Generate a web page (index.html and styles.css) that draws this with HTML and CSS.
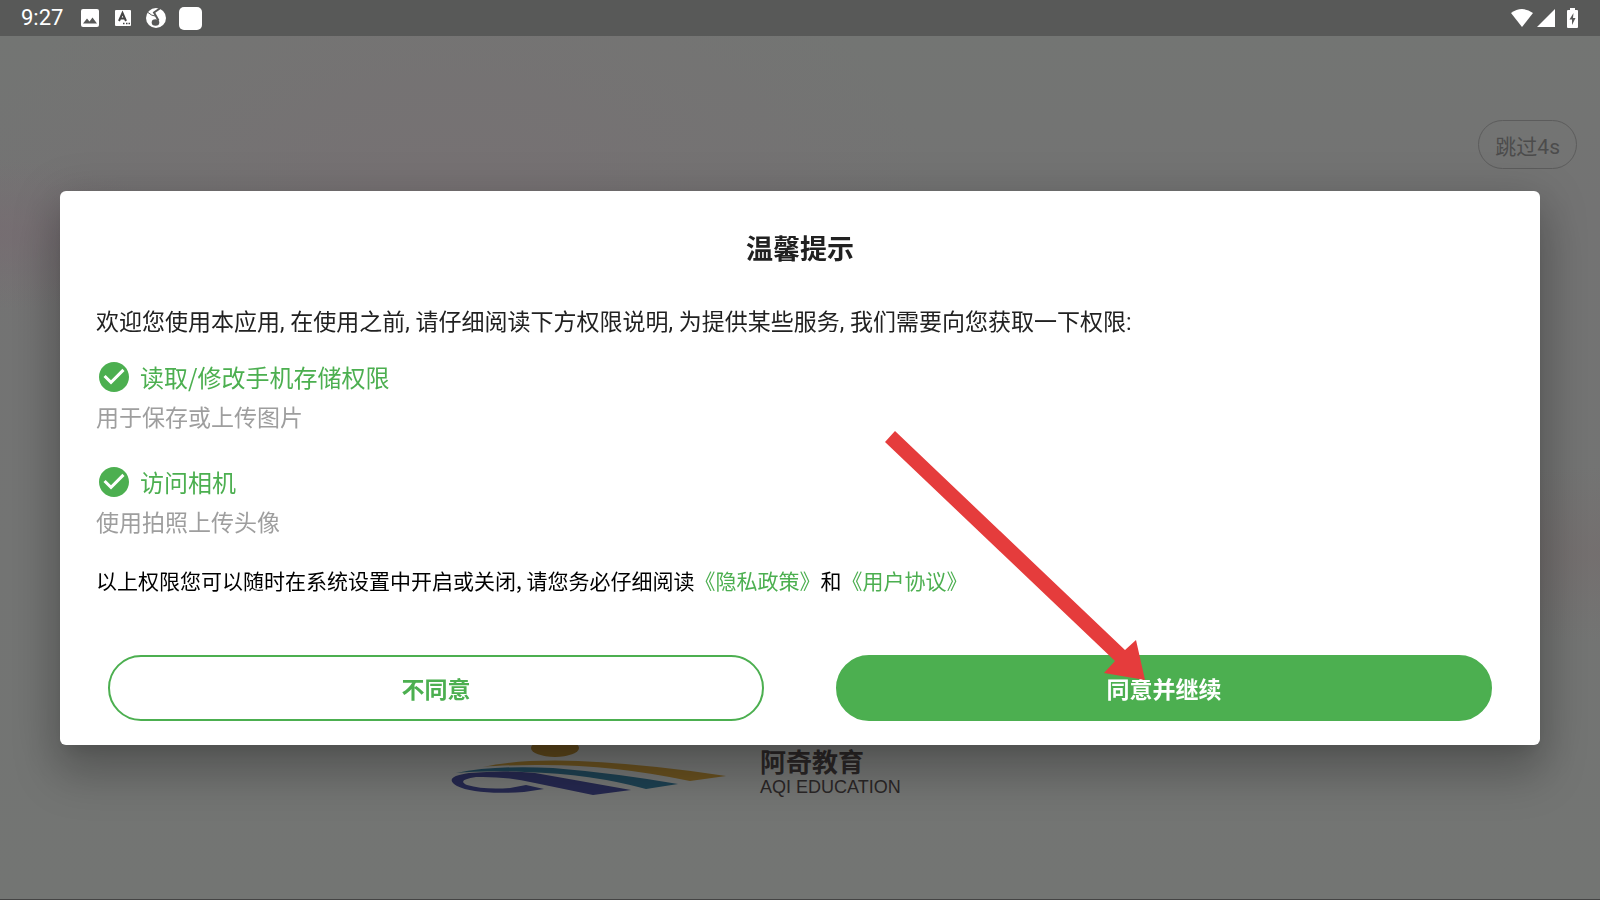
FILE: index.html
```html
<!DOCTYPE html>
<html lang="zh-CN">
<head>
    <meta charset="UTF-8">
    <meta name="viewport" content="width=device-width, initial-scale=1.0">
    <title>温馨提示</title>
    <link rel="stylesheet" href="styles.css">
</head>
<body>
    <header class="status-bar">
        <div class="status-left">
            <span class="clock">9:27</span>
            <svg class="status-icon" viewBox="0 0 20 20" aria-hidden="true">
                <rect x="1" y="1" width="18" height="18" rx="2" fill="#fff"/>
                <path d="M3 15.500l4-5 2.500 3 3-4 4.500 6z" fill="#585958"/>
            </svg>
            <svg class="status-icon" viewBox="0 0 20 20" aria-hidden="true">
                <rect x="2" y="2" width="16" height="16" rx="1" fill="#fff"/>
                <path d="M6 13L9.500 5L13 13M7.300 10.500h4.400" fill="none" stroke="#444" stroke-width="2"/>
                <path d="M10 15.500h1.500M13 15.500h1.500M15.500 15.500h1.500" stroke="#444" stroke-width="1.500"/>
            </svg>
            <svg class="status-icon" viewBox="0 0 20 20" aria-hidden="true">
                <circle cx="10" cy="10" r="10" fill="#fff"/>
                <path d="M14.500 0L8 4.500l4.500 8" fill="none" stroke="#585958" stroke-width="2"/>
                <ellipse cx="9.500" cy="14.500" rx="3.800" ry="3.200" fill="#585958"/>
                <path d="M2 4.500Q6 8 9 8" fill="none" stroke="#585958" stroke-width="1"/>
            </svg>
            <span class="app-square"></span>
        </div>
        <div class="status-right">
            <svg width="22" height="18" viewBox="0 0 22 18" aria-hidden="true">
                <path d="M0 4Q11-4 22 4L11 18z" fill="#fff"/>
            </svg>
            <svg width="18" height="18" viewBox="0 0 18 18" aria-hidden="true">
                <path d="M18 0v18H0z" fill="#fff"/>
            </svg>
            <svg class="battery" width="11" height="20" viewBox="0 0 11 20" aria-hidden="true">
                <path d="M3 0h5v2h2q1 0 1 1v16q0 1-1 1H1q-1 0-1-1V3q0-1 1-1h2z" fill="#fff"/>
                <path d="M6.500 5L2.500 11.500H5V17l3.500-7H6z" fill="#585958"/>
            </svg>
        </div>
    </header>

    <main class="splash">
        <button class="skip" type="button">跳过4s</button>
        <div class="brand">
            <svg class="brand-mark" viewBox="0 0 276 52" aria-hidden="true">
                <ellipse cx="105" cy="5" rx="24" ry="9" fill="#5e471b"/>
                <path d="M33 24Q68 16 128 18Q198 21 276 33L240 38Q160 21 85 22Q52 22 33 24z" fill="#68501f"/>
                <path d="M6 30Q45 22 103 25Q164 30 228 41L196 46Q142 31 75 29Q35 27 6 30z" fill="#1d4051"/>
                <path d="M94 46L74 49Q25 52 7 43Q-8 34 19 30Q55 27 85 30L181 47L143 52L85 40Q54 33 26 34Q6 37 17 42Q34 47 60 45L76 42z" fill="#25284f"/>
            </svg>
            <div class="brand-name">
                <span class="brand-cn">阿奇教育</span>
                <span class="brand-en">AQI EDUCATION</span>
            </div>
        </div>
    </main>

    <div class="overlay">
        <section class="dialog" role="dialog" aria-modal="true" aria-labelledby="dialog-title">
            <h1 id="dialog-title">温馨提示</h1>
            <p class="intro">欢迎您使用本应用, 在使用之前, 请仔细阅读下方权限说明, 为提供某些服务, 我们需要向您获取一下权限:</p>
            <ul class="permissions">
                <li>
                    <h2>
                        <svg class="check" viewBox="0 0 24 24" aria-hidden="true">
                            <path d="M12 2C6.480 2 2 6.480 2 12s4.480 10 10 10 10-4.480 10-10S17.520 2 12 2zm-2 15l-5-5 1.410-1.410L10 14.170l7.590-7.590L19 8l-9 9z" fill="#4caf50"/>
                        </svg>
                        读取/修改手机存储权限
                    </h2>
                    <p>用于保存或上传图片</p>
                </li>
                <li>
                    <h2>
                        <svg class="check" viewBox="0 0 24 24" aria-hidden="true">
                            <path d="M12 2C6.480 2 2 6.480 2 12s4.480 10 10 10 10-4.480 10-10S17.520 2 12 2zm-2 15l-5-5 1.410-1.410L10 14.170l7.590-7.590L19 8l-9 9z" fill="#4caf50"/>
                        </svg>
                        访问相机
                    </h2>
                    <p>使用拍照上传头像</p>
                </li>
            </ul>
            <p class="terms">以上权限您可以随时在系统设置中开启或关闭, 请您务必仔细阅读<a href="#privacy">《隐私政策》</a>和<a href="#agreement">《用户协议》</a></p>
            <div class="actions">
                <button class="btn btn-outline" type="button">不同意</button>
                <button class="btn btn-fill" type="button">同意并继续</button>
            </div>
            <svg class="arrow" viewBox="0 0 260 249" aria-hidden="true">
                <path d="M0 11L10 0L240 219L251 209L260 249L219 242L230 230z" fill="#e53c3c"/>
            </svg>
        </section>
    </div>
</body>
</html>
```
FILE: styles.css
```css
* {
    box-sizing: border-box;
}

body {
    display: flex;
    flex-direction: column;
    min-height: 100vh;
    margin: 0;
    font-family: "Noto Sans CJK SC", sans-serif;
    color: #212121;
    background-color: #737573;
}

h1,
h2,
p,
ul {
    margin: 0;
    padding: 0;
}

/* status bar */
.status-bar {
    display: flex;
    justify-content: space-between;
    align-items: center;
    height: 36px;
    padding: 0 22px 0 21px;
    background-color: #585958;
}

.status-left {
    display: flex;
    align-items: center;
    gap: 13px;
}

.clock {
    margin-right: 4px;
    font-family: Roboto, sans-serif;
    font-size: 22px;
    line-height: 36px;
    color: #fff;
}

.status-icon {
    width: 20px;
    height: 20px;
}

.app-square {
    width: 23px;
    height: 23px;
    border-radius: 5px;
    background-color: #fff;
}

.status-right {
    display: flex;
    align-items: center;
    gap: 4px;
}

.battery {
    margin-left: 8px;
}

/* splash page behind the dialog */
.splash {
    flex: 1;
    display: flex;
    flex-direction: column;
    justify-content: space-between;
    align-items: center;
    padding: 84px 23px 104px;
    border-bottom: 1px solid #444;
    background:
        radial-gradient(ellipse at 0 23%, rgba(120, 104, 112, 0.5), transparent 8%),
        radial-gradient(ellipse at 28% 20%, rgba(120, 112, 115, 0.7), transparent 30%),
        radial-gradient(ellipse at 100% 60%, rgba(116, 108, 108, 0.6), transparent 12%),
        linear-gradient(#737573, #737373 20%, #737573);
}

.skip {
    align-self: flex-end;
    height: 49px;
    padding: 0 16px;
    border: 1px solid #5c5c5c;
    border-radius: 25px;
    background: none;
    font-family: Roboto, "Noto Sans CJK SC", sans-serif;
    font-size: 21px;
    color: #4c4c4c;
}

.brand {
    display: flex;
    align-items: flex-end;
    gap: 34px;
    width: 700px;
    max-width: 100%;
}

.brand-mark {
    width: 276px;
}

.brand-name {
    display: flex;
    flex-direction: column;
    gap: 4px;
    color: #2a2626;
}

.brand-cn {
    font-size: 26px;
    font-weight: bold;
    line-height: 28px;
}

.brand-en {
    font-family: "Liberation Sans", sans-serif;
    font-size: 18px;
    line-height: 16px;
}

/* dialog */
.overlay {
    position: fixed;
    inset: 36px 0 0;
    display: flex;
    align-items: center;
    padding: 0 60px;
}

.dialog {
    position: relative;
    flex: 1;
    padding: 39px 36px 24px;
    border-radius: 6px;
    background-color: #fff;
    box-shadow: 0 11px 15px -7px rgba(0, 0, 0, 0.1),
        0 28px 46px 4px rgba(0, 0, 0, 0.18),
        0 9px 46px 8px rgba(0, 0, 0, 0.12);
}

.dialog h1 {
    font-size: 27px;
    line-height: 36px;
    text-align: center;
}

.intro {
    margin-top: 40px;
    font-family: Roboto, "Noto Sans CJK SC", sans-serif;
    font-size: 23px;
    line-height: 34px;
}

.permissions {
    display: flex;
    flex-direction: column;
    gap: 31px;
    margin-top: 19px;
    list-style: none;
}

.permissions h2 {
    display: flex;
    align-items: center;
    gap: 8px;
    font-size: 24px;
    font-weight: normal;
    line-height: 36px;
    color: #4caf50;
}

.check {
    width: 36px;
    height: 36px;
}

.permissions p {
    margin-top: 4px;
    font-size: 23px;
    line-height: 34px;
    color: #9e9e9e;
}

.terms {
    margin-top: 26px;
    font-size: 21px;
    line-height: 32px;
    color: #000;
}

.terms a {
    color: #4caf50;
    text-decoration: none;
}

.actions {
    display: flex;
    gap: 72px;
    margin-top: 59px;
    padding: 0 12px;
}

.btn {
    flex: 1;
    height: 66px;
    border: 2px solid #4caf50;
    border-radius: 33px;
    font-family: inherit;
    font-size: 23px;
    font-weight: bold;
    cursor: pointer;
}

.btn-outline {
    background-color: #fff;
    color: #4caf50;
}

.btn-fill {
    background-color: #4caf50;
    color: #fff;
}

/* pointer lying over the dialog, ends on the agree button */
.arrow {
    position: absolute;
    top: 240px;
    left: calc(50% + 85px);
    width: 260px;
    pointer-events: none;
}
```
